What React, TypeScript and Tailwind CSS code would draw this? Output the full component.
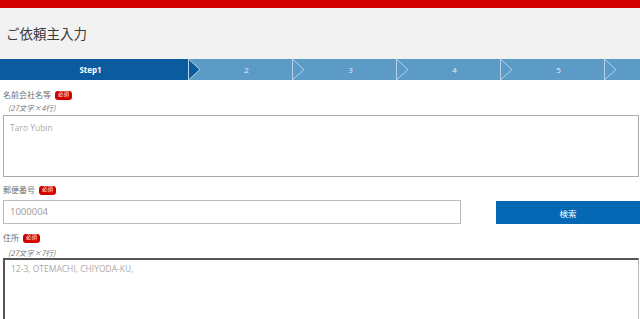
import React from "react";

const jp = { fontFamily: '"Noto Sans CJK JP", "Noto Sans", sans-serif' };
const lat = { fontFamily: '"Open Sans", "Noto Sans", sans-serif' };

function Badge() {
  return (
    <span className="ml-[4px] inline-flex h-[9px] w-[17px] items-center justify-center rounded-[3px] bg-[#d40000] text-[5.5px] leading-none text-white">
      必須
    </span>
  );
}

function Chevron({ filled }: { filled: boolean }) {
  return (
    <svg
      className="absolute right-[-12px] top-0 z-10"
      width="13"
      height="21"
      viewBox="0 0 13 21"
    >
      <polygon
        points="0.5,0 12,10.5 0.5,21"
        fill={filled ? "#0b5c9e" : "#5b9bc6"}
        stroke="#b7d4ea"
        strokeWidth="1"
      />
    </svg>
  );
}

export default function App() {
  const steps = ["2", "3", "4", "5"];
  return (
    <div className="w-[640px] h-[319px] overflow-hidden bg-white" style={jp}>
      <div className="h-[8px] bg-[#d20000]" />
      <div className="h-[51px] bg-[#f2f2f2] flex items-center pl-[6px] pb-[2px]">
        <span className="text-[13.5px] leading-[16px] text-[#3a3a3a]">ご依頼主入力</span>
      </div>
      <div className="flex h-[21px] bg-[#5b9bc6]">
        <div className="relative w-[189px] shrink-0 bg-[#0b5c9e] flex items-center justify-center pr-[8px]">
          <span className="text-[8px] font-bold text-white" style={{ fontFamily: '"Open Sans", sans-serif' }}>Step1</span>
          <Chevron filled />
        </div>
        {steps.map((s) => (
          <div key={s} className="relative w-[104px] shrink-0 flex items-center justify-center pl-[11px]">
            <span className="text-[8px] text-[#e6f0f8]" style={{ fontFamily: '"Open Sans", sans-serif' }}>{s}</span>
            <Chevron filled={false} />
          </div>
        ))}
        <div className="flex-1" />
      </div>

      <div className="pl-[3px] pr-[1px]">
        <div className="mt-[10px] flex h-[10px] items-center">
          <span className="text-[8px] text-[#707070]">名前会社名等</span>
          <Badge />
        </div>
        <div className="mt-[2px] h-[11px] pl-[5px] text-[7.5px] italic text-[#777] leading-[11px]">(27文字×4行)</div>
        <div className="mt-[2px] h-[62px] border border-[#aaa] bg-white px-[6px] pt-[6px] text-[8.5px] leading-[12px] text-[#aaa]" style={lat}>
          Taro Yubin
        </div>

        <div className="mt-[8px] flex h-[10px] items-center">
          <span className="text-[8px] text-[#707070]">郵便番号</span>
          <Badge />
        </div>
        <div className="mt-[5px] flex h-[24px] items-stretch">
          <div className="w-[458px] border border-[#bbb] flex items-center px-[6px] text-[9.5px] leading-[12px] text-[#999]" style={lat}>
            1000004
          </div>
          <div className="ml-[35px] mr-[-1px] flex-1 mt-[1px] bg-[#0568b5] flex items-center justify-center">
            <span className="text-[8.5px] leading-[12px] text-white">検索</span>
          </div>
        </div>

        <div className="mt-[9px] flex h-[10px] items-center">
          <span className="text-[8px] text-[#707070]">住所</span>
          <Badge />
        </div>
        <div className="mt-[4px] h-[11px] pl-[5px] text-[7.5px] italic text-[#777] leading-[11px]">(27文字×7行)</div>
        <div className="h-[80px] border border-[#bbb] border-t-[#555] border-l-[#555] border-t-[2px] border-l-[2px] bg-white px-[6px] pt-[3px] text-[8.5px] leading-[12px] text-[#aaa]" style={lat}>
          12-3, OTEMACHI, CHIYODA-KU,
        </div>
      </div>
    </div>
  );
}
